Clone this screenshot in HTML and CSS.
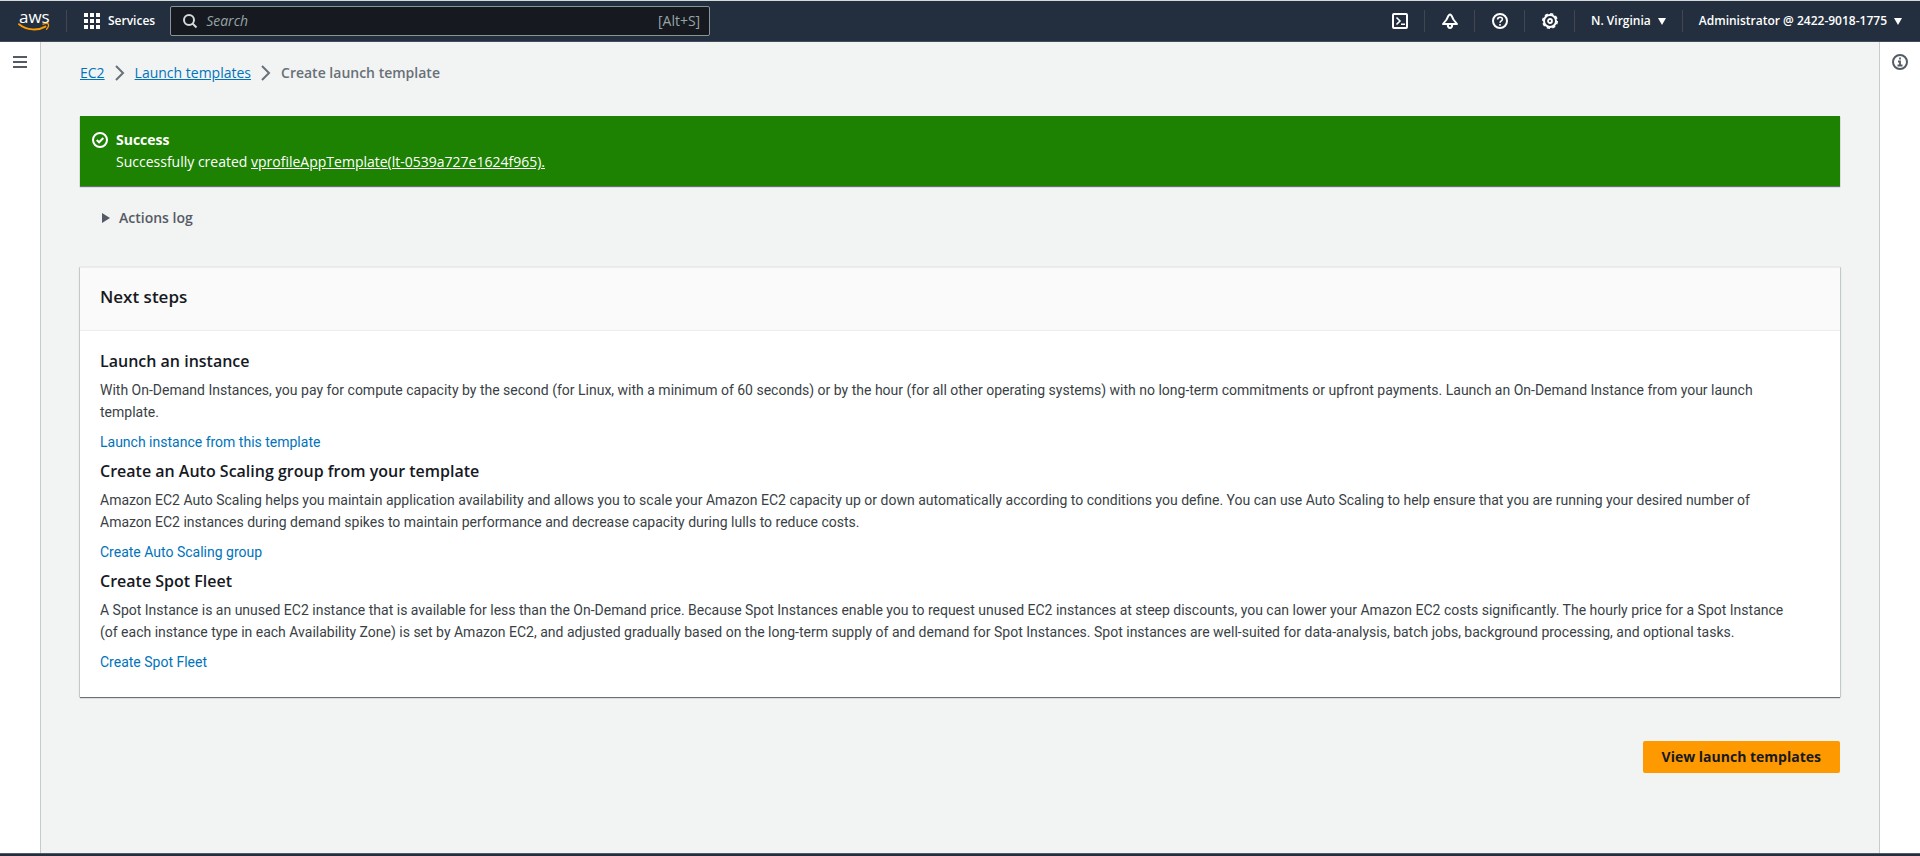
FILE: index.html
```
<!DOCTYPE html>
<html lang="en">
<head>
    <meta charset="UTF-8">
    <meta name="viewport" content="width=device-width, initial-scale=1.0">
    <title>Create launch template | EC2</title>
    <link rel="stylesheet" href="styles.css">
</head>
<body>
    <header class="top-nav">
        <a href="#" class="logo" aria-label="AWS home">
            <span class="logo-text">aws</span>
            <svg class="logo-smile" viewBox="0 0 32 9" width="32" height="9">
                <path d="M1 1.2C9 7.6 20 7.8 27.4 3.6" fill="none" stroke="#ff9900" stroke-width="2" stroke-linecap="round"/>
                <path d="M25 1.2c2-.8 4.600-.8 5.300-.2.5 1-.3 3.600-1.800 5.200" fill="none" stroke="#ff9900" stroke-width="1.300" stroke-linecap="round" stroke-linejoin="round"/>
            </svg>
        </a>
        <button class="services">
            <svg viewBox="0 0 16 16" width="16" height="16" fill="#fff">
                <path d="M0 0h4v4H0zM6 0h4v4H6zM12 0h4v4h-4zM0 6h4v4H0zM6 6h4v4H6zM12 6h4v4h-4zM0 12h4v4H0zM6 12h4v4H6zM12 12h4v4h-4z"/>
            </svg>
            Services
        </button>
        <label class="search">
            <svg viewBox="0 0 16 16" width="16" height="16" fill="none" stroke="#d5dbdb" stroke-width="2">
                <circle cx="7" cy="7" r="5"/>
                <path d="M10.500 10.500l4 4"/>
            </svg>
            <input type="search" placeholder="Search" aria-label="Search">
            <span>[Alt+S]</span>
        </label>
        <div class="nav-right">
            <button class="nav-icon" aria-label="CloudShell">
                <svg viewBox="0 0 16 16" width="16" height="16" fill="none" stroke="#fff" stroke-width="2">
                    <rect x="1" y="1" width="14" height="14" rx="1"/>
                    <path d="M4.500 4.500L8 8l-3.500 3.500M9 11.200h4" stroke-width="1.600"/>
                </svg>
            </button>
            <button class="nav-icon" aria-label="Notifications">
                <svg viewBox="0 0 16 16" width="16" height="16" fill="none" stroke="#fff" stroke-width="2" stroke-linejoin="round">
                    <path d="M8 1.500C6.500 1.500 5.600 4.500 4.600 6.500L1 11h14l-3.600-4.500C10.400 4.500 9.500 1.500 8 1.500z"/>
                    <path d="M5.800 11.500c0 4.600 4.400 4.600 4.400 0"/>
                </svg>
            </button>
            <button class="nav-icon" aria-label="Help">
                <svg viewBox="0 0 16 16" width="16" height="16" fill="none" stroke="#fff" stroke-width="2">
                    <circle cx="8" cy="8" r="7"/>
                    <path d="M5.600 6.600C5.600 3.500 10.400 3.500 10.400 6.300 10.400 8 8 7.800 8 9.800M8 11v1.700" stroke-width="1.600"/>
                </svg>
            </button>
            <button class="nav-icon" aria-label="Settings">
                <svg viewBox="0 0 16 16" width="16" height="16" fill="none" stroke="#fff">
                    <circle cx="8" cy="8" r="6" stroke-width="2"/>
                    <circle cx="8" cy="8" r="7.200" stroke-width="1.600" stroke-dasharray="3.200 2.450"/>
                    <circle cx="8" cy="8" r="2" stroke-width="1.800"/>
                </svg>
            </button>
            <button class="nav-menu">N. Virginia <i class="caret"></i></button>
            <button class="nav-menu account">Administrator @ 2422-9018-1775 <i class="caret"></i></button>
        </div>
    </header>

    <div class="layout">
        <aside class="rail rail-left">
            <button aria-label="Open navigation">
                <svg viewBox="0 0 14 12" width="14" height="12" stroke="#545b64" stroke-width="2">
                    <path d="M0 1h14M0 6h14M0 11h14"/>
                </svg>
            </button>
        </aside>

        <main>
            <nav class="breadcrumb">
                <a href="#">EC2</a>
                <svg viewBox="0 0 10 16" width="10" height="16"><path d="M1 1l7 7-7 7"/></svg>
                <a href="#">Launch templates</a>
                <svg viewBox="0 0 10 16" width="10" height="16"><path d="M1 1l7 7-7 7"/></svg>
                <span>Create launch template</span>
            </nav>

            <div class="flash">
                <svg viewBox="0 0 16 16" width="16" height="16" fill="none" stroke="#fff" stroke-width="2">
                    <circle cx="8" cy="8" r="7"/>
                    <path d="M4.700 8l2.400 2.300 4.200-4.300"/>
                </svg>
                <div>
                    <strong>Success</strong>
                    <p>Successfully created <a href="#">vprofileAppTemplate(lt-0539a727e1624f965).</a></p>
                </div>
            </div>

            <details class="actions-log">
                <summary>Actions log</summary>
            </details>

            <section class="card">
                <h2>Next steps</h2>
                <div class="card-body">
                    <h3>Launch an instance</h3>
                    <p>With On-Demand Instances, you pay for compute capacity by the second (for Linux, with a minimum of 60 seconds) or by the hour (for all other operating systems) with no long-term commitments or upfront payments. Launch an On-Demand Instance from your launch template.</p>
                    <a href="#">Launch instance from this template</a>
                    <h3>Create an Auto Scaling group from your template</h3>
                    <p>Amazon EC2 Auto Scaling helps you maintain application availability and allows you to scale your Amazon EC2 capacity up or down automatically according to conditions you define. You can use Auto Scaling to help ensure that you are running your desired number of Amazon EC2 instances during demand spikes to maintain performance and decrease capacity during lulls to reduce costs.</p>
                    <a href="#">Create Auto Scaling group</a>
                    <h3>Create Spot Fleet</h3>
                    <p>A Spot Instance is an unused EC2 instance that is available for less than the On-Demand price. Because Spot Instances enable you to request unused EC2 instances at steep discounts, you can lower your Amazon EC2 costs significantly. The hourly price for a Spot Instance (of each instance type in each Availability Zone) is set by Amazon EC2, and adjusted gradually based on the long-term supply of and demand for Spot Instances. Spot instances are well-suited for data-analysis, batch jobs, background processing, and optional tasks.</p>
                    <a href="#">Create Spot Fleet</a>
                </div>
            </section>

            <div class="actions">
                <button class="btn-primary">View launch templates</button>
            </div>
        </main>

        <aside class="rail rail-right">
            <button aria-label="Open info panel">
                <svg viewBox="0 0 16 16" width="16" height="16" fill="none" stroke="#545b64" stroke-width="2">
                    <circle cx="8" cy="8" r="7"/>
                    <path d="M8 3.500v2M6 7.500h2v4M5.500 11.500h5" stroke-width="1.800"/>
                </svg>
            </button>
        </aside>
    </div>

    <footer></footer>
</body>
</html>
```

FILE: styles.css
```
* {
    box-sizing: border-box;
}
body {
    margin: 0;
    min-height: 100vh;
    display: flex;
    flex-direction: column;
    font-family: "Open Sans", "Noto Sans", sans-serif;
    font-size: 14px;
    line-height: 22px;
    color: #16191f;
    background-color: #f2f3f3;
}
button {
    font: inherit;
    color: inherit;
    background: none;
    border: none;
    padding: 0;
    cursor: pointer;
}
svg {
    display: block;
    flex: none;
    overflow: visible;
}
a {
    color: #0073bb;
    text-decoration: none;
}
h2, h3, p {
    margin: 0;
}

/* Top navigation */
.top-nav {
    display: flex;
    align-items: center;
    height: 42px;
    background-color: #232f3e;
    border-top: 1px solid #d5dbdb;
    border-bottom: 1px solid #414d5c;
    color: #fff;
    font-size: 12px;
    font-weight: 600;
}
.logo {
    width: 67px;
    height: 22px;
    padding-left: 18px;
    border-right: 1px solid #414750;
    color: #fff;
}
.logo-text {
    display: block;
    padding-left: 1px;
    font-size: 17px;
    line-height: 13px;
    font-weight: 500;
}
.services {
    display: flex;
    align-items: center;
    gap: 8px;
    margin: 0 15px 0 17px;
}
.search {
    display: flex;
    align-items: center;
    gap: 8px;
    flex: 0 1 540px;
    height: 30px;
    padding: 0 9px 0 11px;
    background-color: #16191f;
    border: 1px solid #879596;
    border-radius: 2px;
    color: #95a5a6;
    font-size: 14px;
    font-weight: 400;
}
.search input {
    flex: 1;
    min-width: 0;
    padding: 0;
    border: none;
    outline: none;
    background: none;
    color: #fff;
    font: inherit;
}
.search input::placeholder {
    color: #95a5a6;
    font-style: italic;
}
.nav-right {
    display: flex;
    align-items: center;
    margin-left: auto;
}
.nav-icon {
    display: flex;
    justify-content: center;
    width: 50px;
    padding: 3px 0;
    border-right: 1px solid #414750;
}
.nav-menu {
    display: flex;
    align-items: center;
    gap: 7px;
    padding: 0 16px;
    border-right: 1px solid #414750;
    white-space: nowrap;
}
.account {
    padding-right: 18px;
    border-right: none;
}
.caret {
    border: 4px solid transparent;
    border-top: 7px solid #fff;
    border-bottom: none;
}

/* Page frame */
.layout {
    display: flex;
    flex: 1;
}
.rail {
    flex: none;
    width: 41px;
    padding: 12px;
    background-color: #fff;
}
.rail-left {
    border-right: 1px solid #c4cccc;
}
.rail-right {
    border-left: 1px solid #c4cccc;
}
.rail button {
    display: flex;
    align-items: center;
    justify-content: center;
    width: 16px;
    height: 16px;
}
main {
    flex: 1;
    min-width: 0;
    padding: 20px 39px;
}
footer {
    height: 3px;
    background-color: #232f3e;
    border-top: 1px solid #545b64;
}

.breadcrumb {
    display: flex;
    align-items: center;
    gap: 10px;
    margin-bottom: 32px;
    color: #687078;
    font-weight: 600;
}
.breadcrumb a {
    font-weight: 400;
    text-decoration: underline;
}
.breadcrumb path {
    fill: none;
    stroke: #687078;
    stroke-width: 2;
}

.flash {
    display: flex;
    gap: 8px;
    padding: 13px 12px;
    background-color: #1d8102;
    box-shadow: 0 1px 1px #687078;
    color: #fff;
    font-weight: 500;
}
.flash svg {
    margin-top: 3px;
}
.flash a {
    color: #fff;
    text-decoration: underline;
}

.actions-log {
    padding: 21px 22px 38px;
    color: #545b64;
    font-weight: 600;
}
.actions-log summary {
    display: flex;
    align-items: center;
    gap: 9px;
    cursor: pointer;
}
.actions-log summary::before {
    content: "";
    border: 5px solid transparent;
    border-left: 8px solid #545b64;
    border-right: none;
}

.card {
    background-color: #fff;
    border-top: 1px solid #eaeded;
    box-shadow: 0 1px 1px #687078, 1px 0 1px #d5dbdb, -1px 0 1px #d5dbdb;
}
.card h2 {
    padding: 18px 20px 22px;
    background-color: #fafafa;
    border-bottom: 1px solid #eaeded;
    font-size: 17px;
    font-weight: 600;
}
.card-body {
    padding: 20px 20px 24px;
}
.card-body h3 {
    font-size: 16px;
    line-height: 20px;
    font-weight: 600;
}
.card-body p,
.card-body a {
    font-family: Roboto, "Liberation Sans", sans-serif;
}
.card-body p {
    margin: 8px 0;
    padding-right: 20px;
    color: #3a3f46;
}
.card-body a {
    display: table;
    margin-bottom: 8px;
}
.card-body a:last-child {
    margin-bottom: 0;
}

.actions {
    display: flex;
    justify-content: flex-end;
    margin-top: 44px;
}
.btn-primary {
    padding: 5px 19px;
    background-color: #ff9900;
    border-radius: 2px;
    color: #16191f;
    font-weight: 700;
}
```
